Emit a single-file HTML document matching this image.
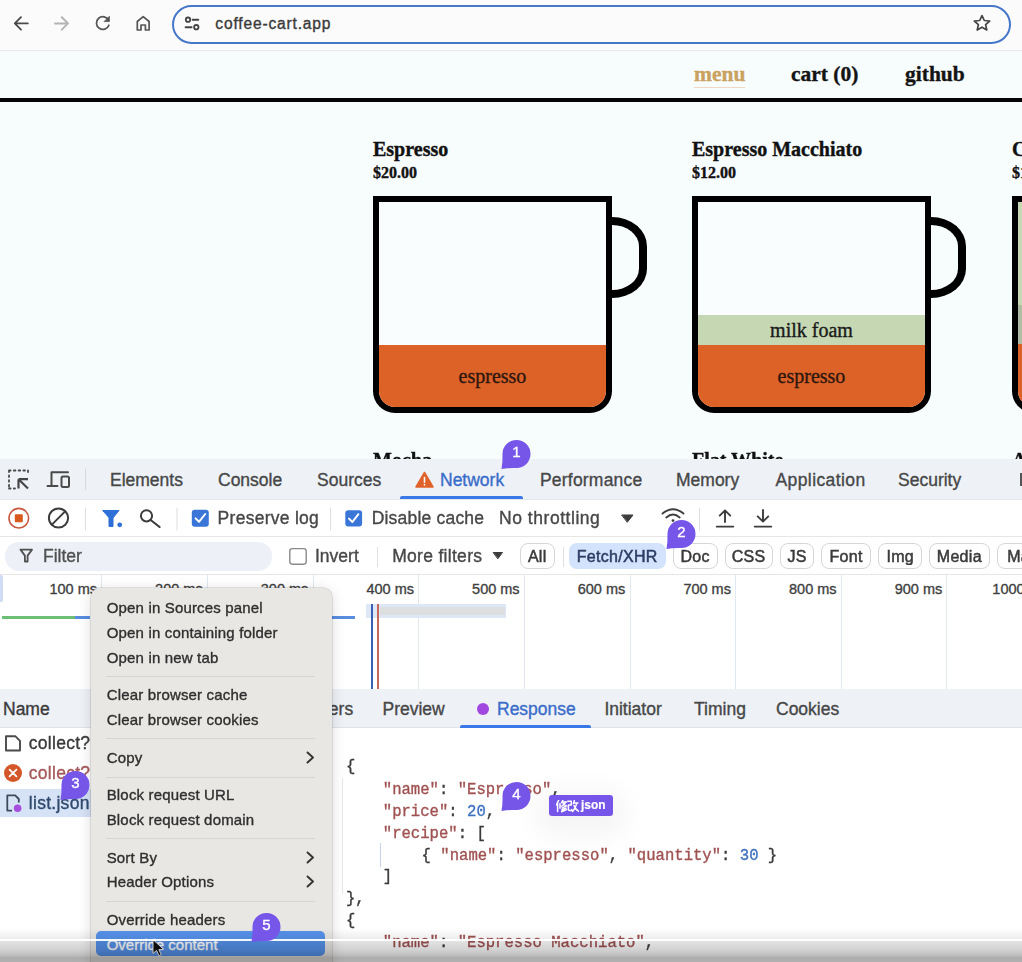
<!DOCTYPE html>
<html><head><meta charset="utf-8"><style>
html,body{margin:0;padding:0}
body{width:1022px;height:962px;overflow:hidden;position:relative;background:#fff}
#w{position:absolute;left:0;top:0;width:1022px;height:962px;overflow:hidden;filter:blur(0.55px)}
.t{position:absolute;white-space:pre;-webkit-text-stroke:0.35px currentColor}
.r{position:absolute}
</style></head><body><div id="w">
<div class="r" style="left:0px;top:0px;width:1022px;height:50px;background:#fbfbfb"></div>
<div class="r" style="left:0px;top:50px;width:1022px;height:1px;background:#e9e9e9"></div>
<svg class="r" style="left:0;top:0" width="1022" height="50" fill="none" stroke-linecap="round" stroke-linejoin="round">
<path d="M21 17.2 L14.8 23.4 L21 29.6 M15 23.4 H27.8" stroke="#4a4a4a" stroke-width="1.8"/>
<path d="M61.8 17.2 L68 23.4 L61.8 29.6 M55 23.4 H67.8" stroke="#b4b4b4" stroke-width="2"/>
<path d="M108.6 20.2 A6.4 6.4 0 1 0 108.9 25.2" stroke="#555" stroke-width="1.75"/>
<path d="M109.4 16.6 L109.4 21.6 L104.4 21.6 Z" fill="#555" stroke="#555" stroke-width="0.8"/>
<path d="M137.3 30 V21.5 L143.2 16.6 L149.1 21.5 V30 H145.4 V25 H141 V30 Z" stroke="#555" stroke-width="1.7"/>
<circle cx="188" cy="19.7" r="2.2" stroke="#444" stroke-width="1.8"/>
<path d="M192.6 19.7 H198.3 M185.6 27.2 H191.6" stroke="#444" stroke-width="1.9"/>
<circle cx="196.3" cy="27.2" r="2.2" stroke="#444" stroke-width="1.8"/>
<path d="M982 15.6 L984.3 20.5 L989.7 21 L985.6 24.6 L986.8 30 L982 27.2 L977.2 30 L978.4 24.6 L974.3 21 L979.7 20.5 Z" stroke="#444" stroke-width="1.7"/>
</svg>
<div class="r" style="left:172px;top:4.5px;width:838.5px;height:39px;box-sizing:border-box;border:2px solid #4777c9;border-radius:20px;background:transparent"></div>
<div class="t" style="left:215.3px;top:15.59px;font:400 15.6px/15.6px 'Liberation Sans', sans-serif;color:#3a3a3a;letter-spacing:0.82px;">coffee-cart.app</div>
<div class="r" style="left:0px;top:51px;width:1022px;height:408px;background:#f7fcfd"></div>
<div class="t" style="left:694px;top:64.19px;font:700 21.5px/21.5px 'Liberation Serif', serif;color:#c9a25f;letter-spacing:0px;">menu</div>
<div class="r" style="left:694px;top:86.5px;width:51px;height:1.2px;background:#f0d9c4"></div>
<div class="t" style="left:791px;top:64.19px;font:700 21.5px/21.5px 'Liberation Serif', serif;color:#141414;letter-spacing:0px;">cart (0)</div>
<div class="t" style="left:905px;top:64.19px;font:700 21.5px/21.5px 'Liberation Serif', serif;color:#141414;letter-spacing:0px;">github</div>
<div class="r" style="left:0px;top:98px;width:1022px;height:4.4px;background:#050505"></div>
<div class="t" style="left:373px;top:138.65px;font:700 20px/20px 'Liberation Serif', serif;color:#111;letter-spacing:0px;">Espresso</div>
<div class="t" style="left:373px;top:165.40px;font:700 16px/16px 'Liberation Serif', serif;color:#111;letter-spacing:0px;">$20.00</div>
<div class="r" style="left:373px;top:196px;width:238.8px;height:217px;box-sizing:border-box;border:6px solid #000;border-radius:0 0 22px 22px;overflow:hidden;background:#f9fdfd">
<div class="r" style="left:0;top:143px;width:227px;height:62px;background:#dc6228"></div>
<div class="t" style="left:0;width:227px;text-align:center;top:163.75px;font:400 20px/20px 'Liberation Serif', serif;color:#2e170e">espresso</div>
</div>
<div class="r" style="left:611.8px;top:217px;width:35px;height:80.5px;box-sizing:border-box;border:8px solid #000;border-left:none;border-radius:0 36px 36px 0/0 30px 30px 0"></div>
<div class="t" style="left:692px;top:138.65px;font:700 20px/20px 'Liberation Serif', serif;color:#111;letter-spacing:0px;">Espresso Macchiato</div>
<div class="t" style="left:692px;top:165.40px;font:700 16px/16px 'Liberation Serif', serif;color:#111;letter-spacing:0px;">$12.00</div>
<div class="r" style="left:692px;top:196px;width:238.8px;height:217px;box-sizing:border-box;border:6px solid #000;border-radius:0 0 22px 22px;overflow:hidden;background:#f9fdfd">
<div class="r" style="left:0;top:113px;width:227px;height:30px;background:#c5d8b3"></div>
<div class="t" style="left:0;width:227px;text-align:center;top:117.65px;font:400 20px/20px 'Liberation Serif', serif;color:#1a1a1a">milk foam</div>
<div class="r" style="left:0;top:143px;width:227px;height:62px;background:#dc6228"></div>
<div class="t" style="left:0;width:227px;text-align:center;top:163.85px;font:400 20px/20px 'Liberation Serif', serif;color:#2e170e">espresso</div>
</div>
<div class="r" style="left:930.8px;top:217px;width:35px;height:80.5px;box-sizing:border-box;border:8px solid #000;border-left:none;border-radius:0 36px 36px 0/0 30px 30px 0"></div>
<div class="t" style="left:1012px;top:138.65px;font:700 20px/20px 'Liberation Serif', serif;color:#111;letter-spacing:0px;">Cappuccino</div>
<div class="t" style="left:1012px;top:165.40px;font:700 16px/16px 'Liberation Serif', serif;color:#111;letter-spacing:0px;">$19.00</div>
<div class="r" style="left:1012px;top:196px;width:238.8px;height:217px;box-sizing:border-box;border:6px solid #000;border-radius:0 0 22px 22px;overflow:hidden;background:#f9fdfd">
<div class="r" style="left:0;top:0px;width:227px;height:103px;background:#c5d8b3"></div>
<div class="r" style="left:0;top:103px;width:227px;height:39px;background:#afbba3"></div>
<div class="r" style="left:0;top:142px;width:227px;height:63px;background:#dc6228"></div>
</div>
<div class="r" style="left:1250.8px;top:217px;width:35px;height:80.5px;box-sizing:border-box;border:8px solid #000;border-left:none;border-radius:0 36px 36px 0/0 30px 30px 0"></div>
<div class="t" style="left:373px;top:450.05px;font:700 20px/20px 'Liberation Serif', serif;color:#111;letter-spacing:0px;">Mocha</div>
<div class="t" style="left:692px;top:450.05px;font:700 20px/20px 'Liberation Serif', serif;color:#111;letter-spacing:0px;">Flat White</div>
<div class="t" style="left:1012px;top:450.05px;font:700 20px/20px 'Liberation Serif', serif;color:#111;letter-spacing:0px;">Americano</div>
<div class="r" style="left:0px;top:459px;width:1022px;height:503px;background:#fff"></div>
<div class="r" style="left:0px;top:459px;width:1022px;height:40px;background:#eef2f7"></div>
<div class="t" style="left:110px;top:471.89px;font:400 17.5px/17.5px 'Liberation Sans', sans-serif;color:#474747;letter-spacing:0px;">Elements</div>
<div class="t" style="left:218px;top:471.89px;font:400 17.5px/17.5px 'Liberation Sans', sans-serif;color:#474747;letter-spacing:0px;">Console</div>
<div class="t" style="left:317px;top:471.89px;font:400 17.5px/17.5px 'Liberation Sans', sans-serif;color:#474747;letter-spacing:0px;">Sources</div>
<div class="t" style="left:440px;top:471.89px;font:400 17.5px/17.5px 'Liberation Sans', sans-serif;color:#3a6cc9;letter-spacing:0px;">Network</div>
<div class="t" style="left:540px;top:471.89px;font:400 17.5px/17.5px 'Liberation Sans', sans-serif;color:#474747;letter-spacing:0.2px;">Performance</div>
<div class="t" style="left:676px;top:471.89px;font:400 17.5px/17.5px 'Liberation Sans', sans-serif;color:#474747;letter-spacing:0px;">Memory</div>
<div class="t" style="left:775.5px;top:471.89px;font:400 17.5px/17.5px 'Liberation Sans', sans-serif;color:#474747;letter-spacing:0.4px;">Application</div>
<div class="t" style="left:898px;top:471.89px;font:400 17.5px/17.5px 'Liberation Sans', sans-serif;color:#474747;letter-spacing:0px;">Security</div>
<div class="r" style="left:1020px;top:473px;width:2.5px;height:13px;background:#555"></div>
<div class="r" style="left:400px;top:496px;width:123px;height:3px;background:#3b78e7;border-radius:2px 2px 0 0"></div>
<div class="r" style="left:0px;top:499px;width:1022px;height:1px;background:#e3e6ea"></div>
<div class="t" style="left:217.6px;top:510.19px;font:400 17.5px/17.5px 'Liberation Sans', sans-serif;color:#474747;letter-spacing:0.27px;">Preserve log</div>
<div class="t" style="left:371.7px;top:510.19px;font:400 17.5px/17.5px 'Liberation Sans', sans-serif;color:#474747;letter-spacing:0.2px;">Disable cache</div>
<div class="t" style="left:499px;top:510.19px;font:400 17.5px/17.5px 'Liberation Sans', sans-serif;color:#474747;letter-spacing:0.54px;">No throttling</div>
<div class="r" style="left:0px;top:536px;width:1022px;height:1px;background:#e6e6e6"></div>
<div class="r" style="left:5px;top:542px;width:267px;height:28.5px;background:#edf1f7;border-radius:14px"></div>
<div class="t" style="left:43px;top:548.19px;font:400 17.5px/17.5px 'Liberation Sans', sans-serif;color:#505050;letter-spacing:0px;">Filter</div>
<div class="t" style="left:315px;top:548.39px;font:400 17.5px/17.5px 'Liberation Sans', sans-serif;color:#474747;letter-spacing:0px;">Invert</div>
<div class="t" style="left:392.2px;top:548.39px;font:400 17.5px/17.5px 'Liberation Sans', sans-serif;color:#474747;letter-spacing:0.3px;">More filters</div>
<div class="r" style="left:376.5px;top:547px;width:1px;height:20px;background:#e0e0e0"></div>
<div class="r" style="left:562.5px;top:547px;width:1px;height:20px;background:#e0e0e0"></div>
<div class="r" style="left:519.7px;top:543px;width:35.09999999999991px;height:25.5px;box-sizing:border-box;border:1px solid #d6d6d6;border-radius:8px;background:#fff"></div>
<div class="t" style="left:519.7px;top:549.06px;width:35.09999999999991px;text-align:center;font:400 16px/16px 'Liberation Sans', sans-serif;color:#3a3a3a;white-space:nowrap;overflow:hidden;letter-spacing:0.3px;-webkit-text-stroke:0.5px #3a3a3a">All</div>
<div class="r" style="left:568.5px;top:543px;width:97.29999999999995px;height:25.5px;background:#d3e3fd;border-radius:8px"></div>
<div class="t" style="left:568.5px;top:549.06px;width:97.29999999999995px;text-align:center;font:400 16px/16px 'Liberation Sans', sans-serif;color:#2b3d63;white-space:nowrap;overflow:hidden;letter-spacing:0.3px;-webkit-text-stroke:0.5px #2b3d63">Fetch/XHR</div>
<div class="r" style="left:672.6px;top:543px;width:45.19999999999993px;height:25.5px;box-sizing:border-box;border:1px solid #d6d6d6;border-radius:8px;background:#fff"></div>
<div class="t" style="left:672.6px;top:549.06px;width:45.19999999999993px;text-align:center;font:400 16px/16px 'Liberation Sans', sans-serif;color:#3a3a3a;white-space:nowrap;overflow:hidden;letter-spacing:0.3px;-webkit-text-stroke:0.5px #3a3a3a">Doc</div>
<div class="r" style="left:724.7px;top:543px;width:47.89999999999998px;height:25.5px;box-sizing:border-box;border:1px solid #d6d6d6;border-radius:8px;background:#fff"></div>
<div class="t" style="left:724.7px;top:549.06px;width:47.89999999999998px;text-align:center;font:400 16px/16px 'Liberation Sans', sans-serif;color:#3a3a3a;white-space:nowrap;overflow:hidden;letter-spacing:0.3px;-webkit-text-stroke:0.5px #3a3a3a">CSS</div>
<div class="r" style="left:779.9px;top:543px;width:34.5px;height:25.5px;box-sizing:border-box;border:1px solid #d6d6d6;border-radius:8px;background:#fff"></div>
<div class="t" style="left:779.9px;top:549.06px;width:34.5px;text-align:center;font:400 16px/16px 'Liberation Sans', sans-serif;color:#3a3a3a;white-space:nowrap;overflow:hidden;letter-spacing:0.3px;-webkit-text-stroke:0.5px #3a3a3a">JS</div>
<div class="r" style="left:821.3px;top:543px;width:49.700000000000045px;height:25.5px;box-sizing:border-box;border:1px solid #d6d6d6;border-radius:8px;background:#fff"></div>
<div class="t" style="left:821.3px;top:549.06px;width:49.700000000000045px;text-align:center;font:400 16px/16px 'Liberation Sans', sans-serif;color:#3a3a3a;white-space:nowrap;overflow:hidden;letter-spacing:0.3px;-webkit-text-stroke:0.5px #3a3a3a">Font</div>
<div class="r" style="left:878px;top:543px;width:44.39999999999998px;height:25.5px;box-sizing:border-box;border:1px solid #d6d6d6;border-radius:8px;background:#fff"></div>
<div class="t" style="left:878px;top:549.06px;width:44.39999999999998px;text-align:center;font:400 16px/16px 'Liberation Sans', sans-serif;color:#3a3a3a;white-space:nowrap;overflow:hidden;letter-spacing:0.3px;-webkit-text-stroke:0.5px #3a3a3a">Img</div>
<div class="r" style="left:928.5px;top:543px;width:61.700000000000045px;height:25.5px;box-sizing:border-box;border:1px solid #d6d6d6;border-radius:8px;background:#fff"></div>
<div class="t" style="left:928.5px;top:549.06px;width:61.700000000000045px;text-align:center;font:400 16px/16px 'Liberation Sans', sans-serif;color:#3a3a3a;white-space:nowrap;overflow:hidden;letter-spacing:0.3px;-webkit-text-stroke:0.5px #3a3a3a">Media</div>
<div class="r" style="left:997.3px;top:543px;width:82.70000000000005px;height:25.5px;box-sizing:border-box;border:1px solid #d6d6d6;border-radius:8px;background:#fff"></div>
<div class="t" style="left:997.3px;top:549.06px;width:82.70000000000005px;text-align:center;font:400 16px/16px 'Liberation Sans', sans-serif;color:#3a3a3a;white-space:nowrap;overflow:hidden;letter-spacing:0.3px;-webkit-text-stroke:0.5px #3a3a3a">Manifest</div>
<div class="r" style="left:0px;top:574px;width:1022px;height:1px;background:#e6e6e6"></div>
<svg class="r" style="left:0;top:459px" width="1022" height="116" fill="none" stroke-linecap="round" stroke-linejoin="round">
<g transform="translate(0,-459)">
<path d="M9 470.5 H28 M9 470.5 V488.5 M9 488.5 H15 M28 470.5 V475" stroke="#4a4a4a" stroke-width="1.8" stroke-dasharray="1.6 3.2"/>
<path d="M18.5 479.2 H28 M18.5 479.2 V488.5 M18.8 479.5 L28 488.5" stroke="#454545" stroke-width="2.2" stroke-linecap="butt"/>
<path d="M51.5 486 V472.2 H68 M47.5 486 H57.5" stroke="#4a4a4a" stroke-width="2"/>
<rect x="61.5" y="476.5" width="7.5" height="10.5" rx="1.5" stroke="#4a4a4a" stroke-width="2"/>
<path d="M85.5 469 V490" stroke="#d6d9de" stroke-width="1"/>
<path d="M424.5 472.5 L433 487 H416 Z" fill="#e0622b" stroke="#e0622b" stroke-width="1.5"/>
<path d="M424.5 477.5 V482.3 M424.5 484.6 V485" stroke="#fff" stroke-width="1.6"/>
<circle cx="18.8" cy="518.2" r="9.8" stroke="#c9573f" stroke-width="1.6"/>
<rect x="14.8" y="514.2" width="8" height="8" rx="0.8" fill="#d8581e"/>
<circle cx="58.5" cy="518" r="9.6" stroke="#3c3c3c" stroke-width="2"/>
<path d="M51.9 524.6 L65.1 511.4" stroke="#3c3c3c" stroke-width="2"/>
<path d="M85.5 508 V530 M177 508 V530 M330.5 508 V530 M699.5 508 V530" stroke="#dedede" stroke-width="1"/>
<path d="M103 510.5 H119 L113 518 V526.5 H109 V518 Z" fill="#2f6fd8" stroke="#2f6fd8" stroke-width="1" />
<circle cx="119.7" cy="524.8" r="2.4" fill="#2f6fd8"/>
<circle cx="146.5" cy="515.8" r="5.6" stroke="#3c3c3c" stroke-width="2"/>
<path d="M150.6 520 L159.6 527" stroke="#3c3c3c" stroke-width="2.1"/>
<rect x="191.8" y="509.8" width="17" height="17" rx="3" fill="#3a76d8"/>
<path d="M195.6 518.4 L199 521.8 L205.2 514" stroke="#fff" stroke-width="2"/>
<rect x="345.3" y="510.2" width="16.8" height="16.4" rx="3" fill="#3a76d8"/>
<path d="M349 518.6 L352.4 522 L358.4 514.2" stroke="#fff" stroke-width="2"/>
<path d="M622 515 H633 L627.5 522 Z" fill="#3c3c3c" stroke="#3c3c3c" stroke-width="1"/>
<path d="M662.5 513.6 Q673 505 683.5 513.6 M666.3 517.4 Q673 511.8 679.7 517.4" stroke="#3f3f3f" stroke-width="1.9"/>
<circle cx="673" cy="520.6" r="1.4" fill="#3f3f3f"/>
<path d="M725 510.4 V522 M719.7 515.6 L725 510.4 L730.3 515.6 M716.7 526.6 H733.3" stroke="#3c3c3c" stroke-width="1.9"/>
<path d="M763 510 V521.6 M757.7 516.4 L763 521.6 L768.3 516.4 M754.7 526.6 H771.3" stroke="#3c3c3c" stroke-width="1.9"/>
<rect x="289.8" y="548.6" width="16.4" height="15.6" rx="2.6" stroke="#8a8a8a" stroke-width="1.4" fill="#fff"/>
<path d="M20.5 549.6 H32 L27.6 555.6 V561.5 H24.9 V555.6 Z" stroke="#505050" stroke-width="1.8"/>
<path d="M493.5 552.5 H502.5 L498 558.5 Z" fill="#3c3c3c" stroke="#3c3c3c" stroke-width="1"/>
</g></svg>
<div class="r" style="left:0px;top:575px;width:1022px;height:114px;background:#fff"></div>
<div class="r" style="left:101.2px;top:575px;width:1px;height:114px;background:#e2e8f0"></div>
<div class="r" style="left:206.86px;top:575px;width:1px;height:114px;background:#e2e8f0"></div>
<div class="r" style="left:312.52px;top:575px;width:1px;height:114px;background:#e2e8f0"></div>
<div class="r" style="left:418.18px;top:575px;width:1px;height:114px;background:#e2e8f0"></div>
<div class="r" style="left:523.84px;top:575px;width:1px;height:114px;background:#e2e8f0"></div>
<div class="r" style="left:629.5px;top:575px;width:1px;height:114px;background:#e2e8f0"></div>
<div class="r" style="left:735.16px;top:575px;width:1px;height:114px;background:#e2e8f0"></div>
<div class="r" style="left:840.82px;top:575px;width:1px;height:114px;background:#e2e8f0"></div>
<div class="r" style="left:946.48px;top:575px;width:1px;height:114px;background:#e2e8f0"></div>
<div class="t" style="left:-103.00px;width:200px;text-align:right;top:582.33px;font:400 14.5px/14.5px 'Liberation Sans', sans-serif;color:#3f3f3f">100 ms</div>
<div class="t" style="left:2.66px;width:200px;text-align:right;top:582.33px;font:400 14.5px/14.5px 'Liberation Sans', sans-serif;color:#3f3f3f">200 ms</div>
<div class="t" style="left:108.32px;width:200px;text-align:right;top:582.33px;font:400 14.5px/14.5px 'Liberation Sans', sans-serif;color:#3f3f3f">300 ms</div>
<div class="t" style="left:213.98px;width:200px;text-align:right;top:582.33px;font:400 14.5px/14.5px 'Liberation Sans', sans-serif;color:#3f3f3f">400 ms</div>
<div class="t" style="left:319.64px;width:200px;text-align:right;top:582.33px;font:400 14.5px/14.5px 'Liberation Sans', sans-serif;color:#3f3f3f">500 ms</div>
<div class="t" style="left:425.30px;width:200px;text-align:right;top:582.33px;font:400 14.5px/14.5px 'Liberation Sans', sans-serif;color:#3f3f3f">600 ms</div>
<div class="t" style="left:530.96px;width:200px;text-align:right;top:582.33px;font:400 14.5px/14.5px 'Liberation Sans', sans-serif;color:#3f3f3f">700 ms</div>
<div class="t" style="left:636.62px;width:200px;text-align:right;top:582.33px;font:400 14.5px/14.5px 'Liberation Sans', sans-serif;color:#3f3f3f">800 ms</div>
<div class="t" style="left:742.28px;width:200px;text-align:right;top:582.33px;font:400 14.5px/14.5px 'Liberation Sans', sans-serif;color:#3f3f3f">900 ms</div>
<div class="t" style="left:847.94px;width:200px;text-align:right;top:582.33px;font:400 14.5px/14.5px 'Liberation Sans', sans-serif;color:#3f3f3f">1000 ms</div>
<div class="r" style="left:0px;top:575px;width:2.5px;height:27px;background:#cfdcf3;border-radius:0 2px 2px 0"></div>
<div class="r" style="left:2px;top:616px;width:73px;height:3px;background:#6cbf75"></div>
<div class="r" style="left:75px;top:616px;width:15px;height:3px;background:#5a8de0"></div>
<div class="r" style="left:331px;top:616px;width:23.5px;height:2.5px;background:#5a8de0"></div>
<div class="r" style="left:365.6px;top:604.4px;width:140px;height:13.4px;background:#dde7f5"></div>
<div class="r" style="left:380px;top:606.5px;width:125px;height:8px;background:#dcdedf"></div>
<div class="r" style="left:370.5px;top:604px;width:2px;height:85px;background:#3b5fb8"></div>
<div class="r" style="left:377px;top:604px;width:2px;height:85px;background:#c8675c"></div>
<div class="r" style="left:0px;top:689px;width:1022px;height:39px;background:#eef1f6"></div>
<div class="r" style="left:0px;top:727px;width:1022px;height:1px;background:#e0e3e8"></div>
<div class="t" style="left:3px;top:700.79px;font:400 17.5px/17.5px 'Liberation Sans', sans-serif;color:#3a3a3a;letter-spacing:0px;">Name</div>
<div class="t" style="left:287px;top:700.79px;font:400 17.5px/17.5px 'Liberation Sans', sans-serif;color:#474747;letter-spacing:0px;">Headers</div>
<div class="t" style="left:382.5px;top:700.79px;font:400 17.5px/17.5px 'Liberation Sans', sans-serif;color:#474747;letter-spacing:0px;">Preview</div>
<div class="t" style="left:497px;top:700.79px;font:400 17.5px/17.5px 'Liberation Sans', sans-serif;color:#3a6cc9;letter-spacing:0px;">Response</div>
<div class="r" style="left:477px;top:703px;width:12px;height:12px;border-radius:50%;background:#a148e0"></div>
<div class="t" style="left:604.4px;top:700.79px;font:400 17.5px/17.5px 'Liberation Sans', sans-serif;color:#474747;letter-spacing:0px;">Initiator</div>
<div class="t" style="left:694px;top:700.79px;font:400 17.5px/17.5px 'Liberation Sans', sans-serif;color:#474747;letter-spacing:0px;">Timing</div>
<div class="t" style="left:776px;top:700.79px;font:400 17.5px/17.5px 'Liberation Sans', sans-serif;color:#474747;letter-spacing:0px;">Cookies</div>
<div class="r" style="left:459.7px;top:725px;width:131.3px;height:3px;background:#3b78e7;border-radius:2px 2px 0 0"></div>
<div class="r" style="left:0px;top:788.6px;width:330px;height:28.8px;background:#d6e2f5"></div>
<svg class="r" style="left:0;top:728px" width="40" height="100" fill="none" stroke-linejoin="round">
<g transform="translate(0,-728)">
<path d="M6 736.3 H15.5 L20 740.8 V750.5 H6 Z" stroke="#4a4a4a" stroke-width="1.9"/>
<circle cx="13" cy="773" r="9" fill="#d4572a"/>
<path d="M9.6 769.6 L16.4 776.4 M16.4 769.6 L9.6 776.4" stroke="#fff" stroke-width="1.8" stroke-linecap="round"/>
<path d="M12 810.6 H7.3 V795.4 H15.2 L18.8 799 V802.5" stroke="#3d4a5c" stroke-width="1.8"/>
<circle cx="17.6" cy="808.3" r="3.8" fill="#a64fdc"/>
</g></svg>
<div class="t" style="left:28.8px;top:735.49px;font:400 17.5px/17.5px 'Liberation Sans', sans-serif;color:#3a3a3a;letter-spacing:0.28px;">collect?</div>
<div class="t" style="left:28.8px;top:765.49px;font:400 17.5px/17.5px 'Liberation Sans', sans-serif;color:#a5595b;letter-spacing:0.28px;">collect?</div>
<div class="t" style="left:28.8px;top:794.79px;font:400 17.5px/17.5px 'Liberation Sans', sans-serif;color:#2f4a6e;letter-spacing:0.28px;">list.json</div>
<div class="r" style="left:342px;top:778px;width:1px;height:116px;background:#e4e7ec"></div>
<div class="r" style="left:380px;top:843px;width:1px;height:24px;background:#c5d3ea"></div>
<div class="t" style="left:346px;top:759.75px;font:400 15.6px/15.6px 'Liberation Mono', monospace;color:#333"><span style="color:#3a3a3a">{</span></div>
<div class="t" style="left:382.8px;top:783.05px;font:400 15.6px/15.6px 'Liberation Mono', monospace;color:#333"><span style="color:#a05252">"name"</span><span style="color:#3a3a3a">: </span><span style="color:#a05252">"Espresso"</span><span style="color:#3a3a3a">,</span></div>
<div class="t" style="left:382.8px;top:805.05px;font:400 15.6px/15.6px 'Liberation Mono', monospace;color:#333"><span style="color:#a05252">"price"</span><span style="color:#3a3a3a">: </span><span style="color:#3e70bf">20</span><span style="color:#3a3a3a">,</span></div>
<div class="t" style="left:382.8px;top:826.95px;font:400 15.6px/15.6px 'Liberation Mono', monospace;color:#333"><span style="color:#a05252">"recipe"</span><span style="color:#3a3a3a">: [</span></div>
<div class="t" style="left:421.6px;top:848.65px;font:400 15.6px/15.6px 'Liberation Mono', monospace;color:#333"><span style="color:#3a3a3a">{ </span><span style="color:#a05252">"name"</span><span style="color:#3a3a3a">: </span><span style="color:#a05252">"espresso"</span><span style="color:#3a3a3a">, </span><span style="color:#a05252">"quantity"</span><span style="color:#3a3a3a">: </span><span style="color:#3e70bf">30</span><span style="color:#3a3a3a"> }</span></div>
<div class="t" style="left:382.8px;top:870.35px;font:400 15.6px/15.6px 'Liberation Mono', monospace;color:#333"><span style="color:#3a3a3a">]</span></div>
<div class="t" style="left:346px;top:891.85px;font:400 15.6px/15.6px 'Liberation Mono', monospace;color:#333"><span style="color:#3a3a3a">},</span></div>
<div class="t" style="left:346px;top:913.85px;font:400 15.6px/15.6px 'Liberation Mono', monospace;color:#333"><span style="color:#3a3a3a">{</span></div>
<div class="t" style="left:382.8px;top:935.85px;font:400 15.6px/15.6px 'Liberation Mono', monospace;color:#333"><span style="color:#a05252">"name"</span><span style="color:#3a3a3a">: </span><span style="color:#a05252">"Espresso Macchiato"</span><span style="color:#3a3a3a">,</span></div>
<div class="r" style="left:90.5px;top:588.3px;width:241px;height:400px;background:#e9e7e4;border-radius:9px;box-shadow:0 0 0 0.8px rgba(0,0,0,0.13),0 2px 14px rgba(0,0,0,0.14)"></div>
<div class="t" style="left:106.7px;top:600.30px;font:400 15px/15px 'Liberation Sans', sans-serif;color:#2f2f2f;letter-spacing:0.17px;">Open in Sources panel</div>
<div class="t" style="left:106.7px;top:625.30px;font:400 15px/15px 'Liberation Sans', sans-serif;color:#2f2f2f;letter-spacing:0.17px;">Open in containing folder</div>
<div class="t" style="left:106.7px;top:650.00px;font:400 15px/15px 'Liberation Sans', sans-serif;color:#2f2f2f;letter-spacing:0.17px;">Open in new tab</div>
<div class="t" style="left:106.7px;top:687.30px;font:400 15px/15px 'Liberation Sans', sans-serif;color:#2f2f2f;letter-spacing:0.17px;">Clear browser cache</div>
<div class="t" style="left:106.7px;top:712.30px;font:400 15px/15px 'Liberation Sans', sans-serif;color:#2f2f2f;letter-spacing:0.17px;">Clear browser cookies</div>
<div class="t" style="left:106.7px;top:750.00px;font:400 15px/15px 'Liberation Sans', sans-serif;color:#2f2f2f;letter-spacing:0.17px;">Copy</div>
<svg class="r" style="left:304px;top:749.7px" width="12" height="16" fill="none"><path d="M3.5 2.5 L9 7.5 L3.5 12.5" stroke="#333" stroke-width="1.9" stroke-linecap="round" stroke-linejoin="round"/></svg>
<div class="t" style="left:106.7px;top:787.30px;font:400 15px/15px 'Liberation Sans', sans-serif;color:#2f2f2f;letter-spacing:0.17px;">Block request URL</div>
<div class="t" style="left:106.7px;top:812.30px;font:400 15px/15px 'Liberation Sans', sans-serif;color:#2f2f2f;letter-spacing:0.17px;">Block request domain</div>
<div class="t" style="left:106.7px;top:849.80px;font:400 15px/15px 'Liberation Sans', sans-serif;color:#2f2f2f;letter-spacing:0.17px;">Sort By</div>
<svg class="r" style="left:304px;top:849.5px" width="12" height="16" fill="none"><path d="M3.5 2.5 L9 7.5 L3.5 12.5" stroke="#333" stroke-width="1.9" stroke-linecap="round" stroke-linejoin="round"/></svg>
<div class="t" style="left:106.7px;top:874.30px;font:400 15px/15px 'Liberation Sans', sans-serif;color:#2f2f2f;letter-spacing:0.17px;">Header Options</div>
<svg class="r" style="left:304px;top:874px" width="12" height="16" fill="none"><path d="M3.5 2.5 L9 7.5 L3.5 12.5" stroke="#333" stroke-width="1.9" stroke-linecap="round" stroke-linejoin="round"/></svg>
<div class="t" style="left:106.7px;top:912.30px;font:400 15px/15px 'Liberation Sans', sans-serif;color:#2f2f2f;letter-spacing:0.17px;">Override headers</div>
<div class="r" style="left:106px;top:676px;width:209px;height:1px;background:#d7d5d2"></div>
<div class="r" style="left:106px;top:738px;width:209px;height:1px;background:#d7d5d2"></div>
<div class="r" style="left:106px;top:776.5px;width:209px;height:1px;background:#d7d5d2"></div>
<div class="r" style="left:106px;top:838.4px;width:209px;height:1px;background:#d7d5d2"></div>
<div class="r" style="left:106px;top:900.5px;width:209px;height:1px;background:#d7d5d2"></div>
<div class="r" style="left:95.8px;top:931px;width:229px;height:24.8px;background:#5692ea;border-radius:5px"></div>
<div class="t" style="left:106.7px;top:937.10px;font:400 15px/15px 'Liberation Sans', sans-serif;color:#ffffff;letter-spacing:0px;">Override content</div>
<svg class="r" style="left:150.5px;top:938px" width="16" height="22"><path d="M2 1.5 L2 15.5 L5.6 12.4 L8 17.8 L10.2 16.8 L7.9 11.6 L12.6 11.4 Z" fill="#111" stroke="#f4f4f4" stroke-width="1" stroke-linejoin="round"/></svg>
<div class="r" style="left:0px;top:928px;width:1022px;height:11px;background:linear-gradient(to bottom, rgba(0,0,0,0) 0%, rgba(0,0,0,0.035) 50%, rgba(0,0,0,0.07) 100%)"></div>
<div class="r" style="left:0px;top:939px;width:1022px;height:2px;background:rgba(255,255,255,0.92)"></div>
<div class="r" style="left:0px;top:941px;width:1022px;height:21px;background:linear-gradient(to bottom, rgba(0,0,0,0.11) 0%, rgba(0,0,0,0.18) 43%, rgba(0,0,0,0.25) 67%, rgba(0,0,0,0.32) 79%, rgba(0,0,0,0.31) 100%)"></div>
<svg class="r" style="left:0;top:0;overflow:visible" width="1" height="1"><path d="M502.50 454.00 A14.0 14.0 0 1 1 516.50 468.00 Q507.82 467.72 501.50 469.00 Q502.78 462.68 502.50 454.00 Z" fill="#7656e9"/></svg>
<div class="t" style="left:502px;top:444.40px;width:29px;text-align:center;font:400 15px/15px 'Liberation Sans', sans-serif;color:#fff">1</div>
<svg class="r" style="left:0;top:0;overflow:visible" width="1" height="1"><path d="M667.50 534.00 A14.0 14.0 0 1 1 681.50 548.00 Q672.82 547.72 666.50 549.00 Q667.78 542.68 667.50 534.00 Z" fill="#7656e9"/></svg>
<div class="t" style="left:667px;top:524.40px;width:29px;text-align:center;font:400 15px/15px 'Liberation Sans', sans-serif;color:#fff">2</div>
<svg class="r" style="left:0;top:0;overflow:visible" width="1" height="1"><path d="M61.50 785.00 A14.0 14.0 0 1 1 75.50 799.00 Q66.82 798.72 60.50 800.00 Q61.78 793.68 61.50 785.00 Z" fill="#7656e9"/></svg>
<div class="t" style="left:61px;top:775.40px;width:29px;text-align:center;font:400 15px/15px 'Liberation Sans', sans-serif;color:#fff">3</div>
<svg class="r" style="left:0;top:0;overflow:visible" width="1" height="1"><path d="M502.50 796.00 A14.0 14.0 0 1 1 516.50 810.00 Q507.82 809.72 501.50 811.00 Q502.78 804.68 502.50 796.00 Z" fill="#7656e9"/></svg>
<div class="t" style="left:502px;top:786.40px;width:29px;text-align:center;font:400 15px/15px 'Liberation Sans', sans-serif;color:#fff">4</div>
<svg class="r" style="left:0;top:0;overflow:visible" width="1" height="1"><path d="M252.50 927.00 A14.0 14.0 0 1 1 266.50 941.00 Q257.82 940.72 251.50 942.00 Q252.78 935.68 252.50 927.00 Z" fill="#7656e9"/></svg>
<div class="t" style="left:252px;top:917.40px;width:29px;text-align:center;font:400 15px/15px 'Liberation Sans', sans-serif;color:#fff">5</div>
<div class="r" style="left:548.7px;top:795px;width:64px;height:20.7px;background:#7656e9;border-radius:3px;box-shadow:0 8px 26px 12px rgba(0,0,0,0.045)"></div>
<div class="t" style="left:581.0px;top:799.53px;font:700 11.9px/11.9px 'Liberation Sans', sans-serif;color:#fff;letter-spacing:0px;-webkit-text-stroke:0.2px #fff">json</div>
<svg class="r" style="left:556px;top:799.5px" width="24" height="13" fill="none" stroke="#fff" stroke-width="1.5" stroke-linecap="round" stroke-linejoin="round">
<path d="M2.6 0.4 L0.4 5 M1.6 3.4 V11.4 M4 3.4 V8.2 M6.8 0.3 L5.6 2.6 M6.1 2.1 H10.6 M9.6 2.1 Q8.4 4.8 5.6 6.2 M7.2 3.6 Q8.8 5.4 10.8 6.1 M9 6.6 L6.2 8 M10 8.1 L5.8 10 M10.6 9.6 L5.6 11.8"/>
<path d="M11.8 1.2 H15.3 V5 H12.4 V9.6 Q12.4 10.6 13.4 10.6 H15.6 V9.4 M18.4 0.2 L17.4 3.6 M17.6 3 H22 M20.8 3 Q20 8 16.6 11.4 M18 5.6 Q19.6 9.6 22.4 11.2"/>
</svg>
</div></body></html>
